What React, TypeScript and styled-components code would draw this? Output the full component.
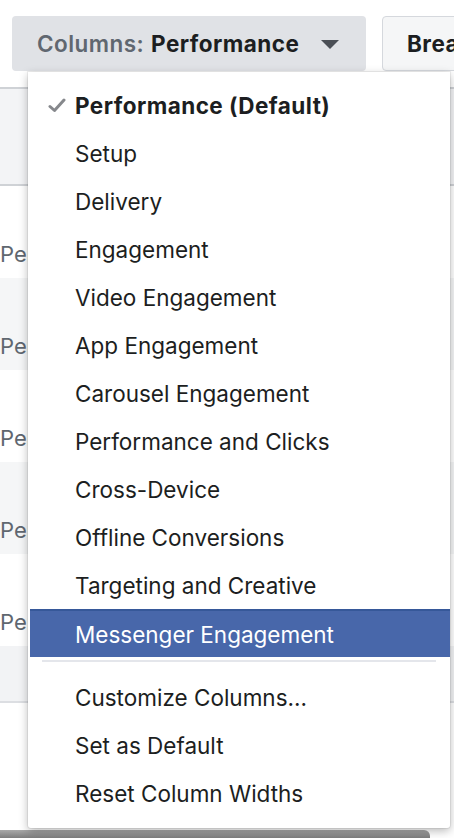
import styled, { createGlobalStyle } from "styled-components";

const GlobalStyle = createGlobalStyle`
  html, body {
    margin: 0;
    padding: 0;
    background: #ffffff;
  }
  body {
    font-family: Inter, "Noto Sans", "Liberation Sans", sans-serif;
    -webkit-font-smoothing: antialiased;
  }
`;

const Page = styled.div`
  position: relative;
  width: 454px;
  height: 838px;
  overflow: hidden;
  background: #ffffff;
`;

const Toolbar = styled.div`
  display: flex;
  gap: 16px;
  padding: 16px 0 0 12px;
  height: 56px;
  box-sizing: border-box;
`;

const ColumnsButton = styled.div`
  display: flex;
  align-items: center;
  flex: 0 0 354px;
  height: 55px;
  box-sizing: border-box;
  padding-left: 25px;
  border-radius: 4px;
  background: #e0e2e6;
  font-size: 22.5px;
  letter-spacing: 0.45px;
  white-space: nowrap;
`;

const ButtonLabel = styled.span`
  color: #606770;
  font-weight: 600;
`;

const ButtonValue = styled.span`
  color: #1c1e21;
  font-weight: 700;
  margin-left: 7px;
`;

const Caret = styled.span`
  margin-left: 22px;
  width: 0;
  height: 0;
  border-left: 9px solid transparent;
  border-right: 9px solid transparent;
  border-top: 9px solid #4b4f56;
  margin-top: 2px;
`;

const BreakButton = styled.div`
  display: flex;
  align-items: center;
  flex: 0 0 auto;
  height: 55px;
  box-sizing: border-box;
  padding-left: 24px;
  padding-right: 20px;
  border: 1px solid #d5d8dd;
  border-radius: 4px;
  background: #f5f6f7;
  color: #1c1e21;
  font-size: 22.5px;
  font-weight: 700;
  letter-spacing: 0.45px;
  white-space: nowrap;
`;

const Table = styled.div`
  display: flex;
  flex-direction: column;
  padding-top: 31px;
  height: 826px;
  box-sizing: border-box;
  border-bottom: 2px solid #d6d8dc;
`;

const HeaderRow = styled.div`
  height: 95px;
  border-top: 2px solid #cfd2d6;
  border-bottom: 2px solid #cfd2d6;
  background: #f3f4f6;
`;

const Row = styled.div<{ $shaded: boolean }>`
  display: flex;
  align-items: flex-end;
  height: 92px;
  box-sizing: border-box;
  padding-bottom: 11px;
  background: ${({ $shaded }) => ($shaded ? "#f5f6f7" : "#ffffff")};
  color: #606770;
  font-size: 22px;
`;

const TotalRow = styled.div`
  height: 55px;
  background: #f2f3f5;
  border-bottom: 2px solid #dcdee2;
`;

const Cell = styled.span`
  padding-left: 0;
`;

const Scrollbar = styled.div`
  position: absolute;
  left: 0;
  bottom: 0;
  width: 430px;
  height: 8px;
  border-radius: 0 6px 0 0;
  background: linear-gradient(#a9a9a9, #7d7d7d);
`;

const Menu = styled.div`
  position: absolute;
  left: 28px;
  top: 72px;
  width: 422px;
  height: 756px;
  box-sizing: border-box;
  padding: 9px 0 10px;
  background: #ffffff;
  border-radius: 0 0 3px 3px;
  box-shadow: 0 3px 10px rgba(0, 0, 0, 0.28), 0 0 0 1px rgba(0, 0, 0, 0.06);
  display: flex;
  flex-direction: column;
`;

const Item = styled.div<{ $active?: boolean; $bold?: boolean }>`
  position: relative;
  display: flex;
  align-items: center;
  height: 48px;
  box-sizing: border-box;
  margin-left: 2px;
  padding-left: 45px;
  font-size: 22.5px;
  font-weight: ${({ $bold }) => ($bold ? 700 : 400)};
  letter-spacing: ${({ $bold }) => ($bold ? "0.45px" : "0")};
  color: ${({ $active }) => ($active ? "#ffffff" : "#1c1e21")};
  background: ${({ $active }) => ($active ? "#4867aa" : "transparent")};
  border-top: ${({ $active }) => ($active ? "2px solid #365899" : "none")};
  white-space: nowrap;
`;

const Check = styled.svg`
  position: absolute;
  left: 18px;
  top: 50%;
  margin-top: -7px;
`;

const Separator = styled.div`
  height: 2px;
  margin: 3px 14px 11px;
  background: #e4e6eb;
`;

const presets = [
  "Setup",
  "Delivery",
  "Engagement",
  "Video Engagement",
  "App Engagement",
  "Carousel Engagement",
  "Performance and Clicks",
  "Cross-Device",
  "Offline Conversions",
  "Targeting and Creative",
];

const actions = ["Customize Columns...", "Set as Default", "Reset Column Widths"];

export default function App() {
  return (
    <Page>
      <GlobalStyle />
      <Toolbar>
        <ColumnsButton>
          <ButtonLabel>Columns:</ButtonLabel>
          <ButtonValue>Performance</ButtonValue>
          <Caret />
        </ColumnsButton>
        <BreakButton>Breakdown</BreakButton>
      </Toolbar>
      <Table>
        <HeaderRow />
        {[0, 1, 2, 3, 4].map(i => (
          <Row key={i} $shaded={i % 2 === 1}>
            <Cell>Per</Cell>
          </Row>
        ))}
        <TotalRow />
      </Table>
      <Scrollbar />
      <Menu>
        <Item $bold>
          <Check width="18" height="15" viewBox="0 0 18 15">
            <path
              d="M2 8.5 L6.5 12.5 L16 2"
              fill="none"
              stroke="#86888c"
              strokeWidth="3"
              strokeLinecap="round"
              strokeLinejoin="round"
            />
          </Check>
          Performance (Default)
        </Item>
        {presets.map(p => (
          <Item key={p}>{p}</Item>
        ))}
        <Item $active>Messenger Engagement</Item>
        <Separator />
        {actions.map(a => (
          <Item key={a}>{a}</Item>
        ))}
      </Menu>
    </Page>
  );
}
